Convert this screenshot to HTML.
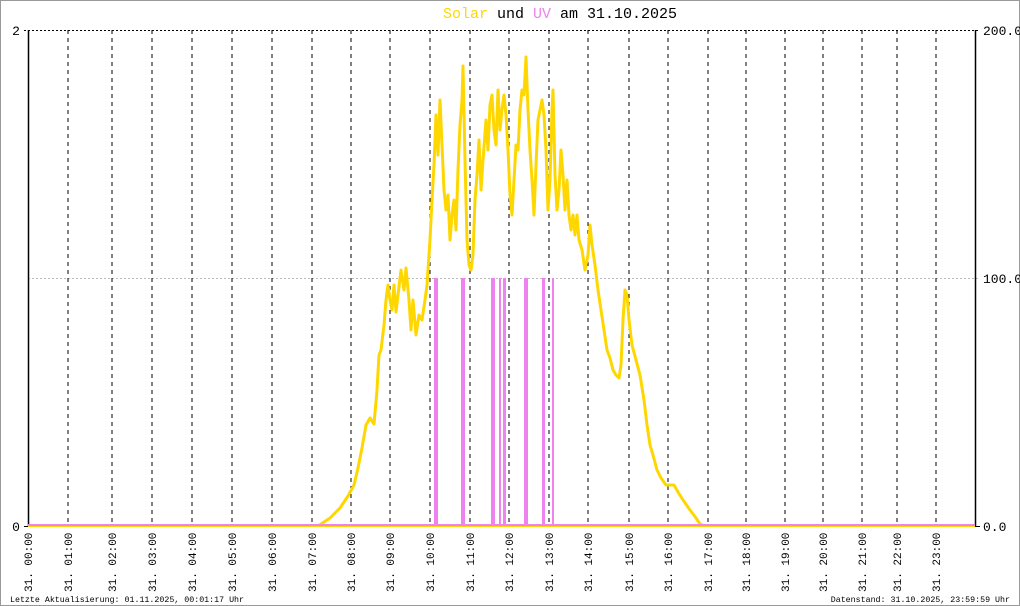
<!DOCTYPE html><html><head><style>body{margin:0;background:#fff}svg{display:block}text{font-family:"Liberation Mono","DejaVu Sans Mono",monospace}</style></head><body>
<svg width="1020" height="606" xmlns="http://www.w3.org/2000/svg">
<rect x="0.5" y="0.5" width="1019" height="605" fill="#fff" stroke="#999"/>
<text x="560" y="18" font-size="15" text-anchor="middle"><tspan fill="#ffd700">Solar</tspan><tspan fill="#000"> und </tspan><tspan fill="#ee82ee">UV</tspan><tspan fill="#000"> am 31.10.2025</tspan></text>
<line x1="24" y1="30.5" x2="980" y2="30.5" stroke="#000" stroke-dasharray="2,2"/>
<line x1="28" y1="278.5" x2="980" y2="278.5" stroke="#bbb" stroke-dasharray="2,2"/>
<g stroke="#000" stroke-dasharray="4,4">
<line x1="68" y1="30" x2="68" y2="526"/><line x1="112" y1="30" x2="112" y2="526"/><line x1="152" y1="30" x2="152" y2="526"/><line x1="192" y1="30" x2="192" y2="526"/><line x1="232" y1="30" x2="232" y2="526"/><line x1="272" y1="30" x2="272" y2="526"/><line x1="312" y1="30" x2="312" y2="526"/><line x1="351" y1="30" x2="351" y2="526"/><line x1="390" y1="30" x2="390" y2="526"/><line x1="430" y1="30" x2="430" y2="526"/><line x1="470" y1="30" x2="470" y2="526"/><line x1="509" y1="30" x2="509" y2="526"/><line x1="549" y1="30" x2="549" y2="526"/><line x1="588" y1="30" x2="588" y2="526"/><line x1="629" y1="30" x2="629" y2="526"/><line x1="668" y1="30" x2="668" y2="526"/><line x1="708" y1="30" x2="708" y2="526"/><line x1="746" y1="30" x2="746" y2="526"/><line x1="785" y1="30" x2="785" y2="526"/><line x1="823" y1="30" x2="823" y2="526"/><line x1="862" y1="30" x2="862" y2="526"/><line x1="897" y1="30" x2="897" y2="526"/><line x1="936" y1="30" x2="936" y2="526"/>
</g>
<line x1="28.5" y1="30" x2="28.5" y2="527" stroke="#000" stroke-width="1.5"/>
<line x1="975.5" y1="30" x2="975.5" y2="527" stroke="#000" stroke-width="1.5"/>
<line x1="24" y1="526.5" x2="28" y2="526.5" stroke="#000"/>
<line x1="975" y1="526.5" x2="980" y2="526.5" stroke="#000"/>
<text x="16" y="35" font-size="13" text-anchor="middle">2</text>
<text x="16" y="531" font-size="13" text-anchor="middle">0</text>
<text x="983" y="35" font-size="13">200.0</text>
<text x="983" y="283" font-size="13">100.0</text>
<text x="983" y="531" font-size="13">0.0</text>
<polyline fill="none" stroke="#ffd700" stroke-width="3" stroke-linejoin="round" points="318,526 330,518 340,508 348,496 354,485 358,468 362,448 366,425 370,418 374,424 377,390 379,355 381,350 384,325 386,300 388,285 390,300 392,310 394,285 396,312 398,295 401,270 404,290 406,268 409,300 411,330 413,300 416,335 419,315 422,320 425,300 427,285 430,240 432,200 434,165 436,115 438,155 440,100 442,145 444,190 446,210 448,195 450,240 452,215 454,200 456,230 458,170 460,125 462,100 463,66 465,160 467,240 469,265 471,270 473,255 475,200 477,175 479,140 481,190 483,160 486,120 488,150 490,105 492,95 494,130 496,145 498,90 500,130 502,110 504,95 506,115 508,150 510,195 512,215 514,180 516,145 518,150 520,110 522,90 524,95 526,57 528,110 530,150 532,180 534,215 536,165 538,120 540,110 542,100 544,115 546,150 548,210 550,180 552,110 553,90 555,175 557,210 559,190 561,150 563,175 565,210 567,180 569,215 571,230 573,215 575,235 577,215 579,240 582,250 585,270 588,255 590,225 592,245 595,265 598,290 601,310 604,330 607,350 610,358 613,370 616,375 619,378 621,365 623,320 625,290 627,295 629,320 632,345 636,360 640,375 644,400 647,425 650,445 653,455 657,470 661,478 666,485 674,485 678,492 683,500 690,510 696,518 700,524 705,526"/>
<line x1="28" y1="526.5" x2="975" y2="526.5" stroke="#ffd700" stroke-width="1"/>
<line x1="28" y1="525" x2="975" y2="525" stroke="#ee82ee" stroke-width="2"/>
<g fill="#ee82ee">
<rect x="434" y="278" width="4" height="248"/><rect x="461" y="278" width="4" height="248"/><rect x="491" y="278" width="4" height="248"/><rect x="499" y="278" width="2" height="248"/><rect x="503" y="278" width="3" height="248"/><rect x="524" y="278" width="4" height="248"/><rect x="542" y="278" width="3" height="248"/><rect x="552" y="278" width="2" height="248"/>
</g>
<g font-size="11" fill="#000">
<text transform="translate(32,592) rotate(-90)">31. 00:00</text>
<text transform="translate(72,592) rotate(-90)">31. 01:00</text>
<text transform="translate(116,592) rotate(-90)">31. 02:00</text>
<text transform="translate(156,592) rotate(-90)">31. 03:00</text>
<text transform="translate(196,592) rotate(-90)">31. 04:00</text>
<text transform="translate(236,592) rotate(-90)">31. 05:00</text>
<text transform="translate(276,592) rotate(-90)">31. 06:00</text>
<text transform="translate(316,592) rotate(-90)">31. 07:00</text>
<text transform="translate(355,592) rotate(-90)">31. 08:00</text>
<text transform="translate(394,592) rotate(-90)">31. 09:00</text>
<text transform="translate(434,592) rotate(-90)">31. 10:00</text>
<text transform="translate(474,592) rotate(-90)">31. 11:00</text>
<text transform="translate(513,592) rotate(-90)">31. 12:00</text>
<text transform="translate(553,592) rotate(-90)">31. 13:00</text>
<text transform="translate(592,592) rotate(-90)">31. 14:00</text>
<text transform="translate(633,592) rotate(-90)">31. 15:00</text>
<text transform="translate(672,592) rotate(-90)">31. 16:00</text>
<text transform="translate(712,592) rotate(-90)">31. 17:00</text>
<text transform="translate(750,592) rotate(-90)">31. 18:00</text>
<text transform="translate(789,592) rotate(-90)">31. 19:00</text>
<text transform="translate(827,592) rotate(-90)">31. 20:00</text>
<text transform="translate(866,592) rotate(-90)">31. 21:00</text>
<text transform="translate(901,592) rotate(-90)">31. 22:00</text>
<text transform="translate(940,592) rotate(-90)">31. 23:00</text>
</g>
<text x="10" y="602" font-size="8.3">Letzte Aktualisierung: 01.11.2025, 00:01:17 Uhr</text>
<text x="1010" y="602" font-size="8.3" text-anchor="end">Datenstand: 31.10.2025, 23:59:59 Uhr</text>
</svg>
</body></html>
